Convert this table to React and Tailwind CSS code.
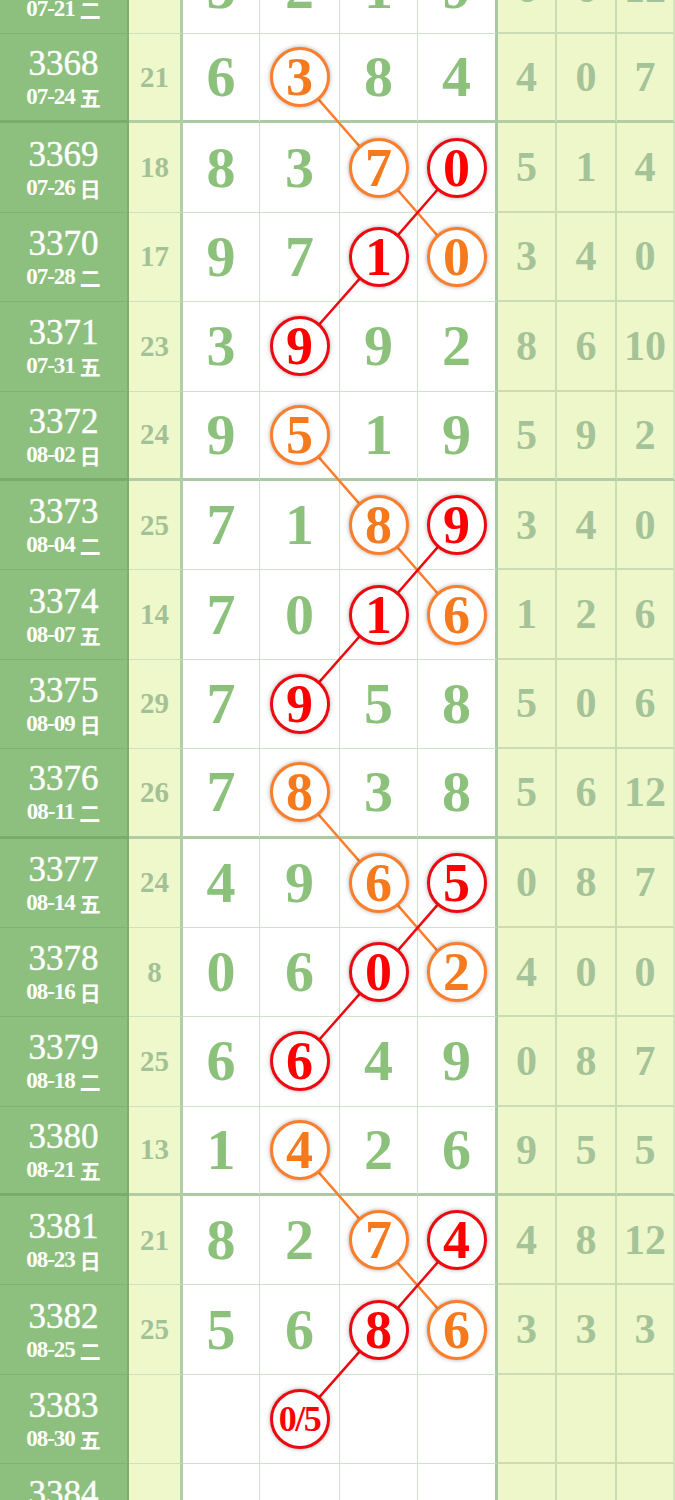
import React from "react";

const ROW_H = 89.4;

const rows = [
  { no: "3367", date: "07-21", wd: "二", sum: "15", d: ["3", "2", "1", "9"], r: ["6", "6", "12"], m: {} },
  { no: "3368", date: "07-24", wd: "五", sum: "21", d: ["6", "3", "8", "4"], r: ["4", "0", "7"], m: { 1: "o" } },
  { no: "3369", date: "07-26", wd: "日", sum: "18", d: ["8", "3", "7", "0"], r: ["5", "1", "4"], m: { 2: "o", 3: "r" } },
  { no: "3370", date: "07-28", wd: "二", sum: "17", d: ["9", "7", "1", "0"], r: ["3", "4", "0"], m: { 2: "r", 3: "o" } },
  { no: "3371", date: "07-31", wd: "五", sum: "23", d: ["3", "9", "9", "2"], r: ["8", "6", "10"], m: { 1: "r" } },
  { no: "3372", date: "08-02", wd: "日", sum: "24", d: ["9", "5", "1", "9"], r: ["5", "9", "2"], m: { 1: "o" } },
  { no: "3373", date: "08-04", wd: "二", sum: "25", d: ["7", "1", "8", "9"], r: ["3", "4", "0"], m: { 2: "o", 3: "r" } },
  { no: "3374", date: "08-07", wd: "五", sum: "14", d: ["7", "0", "1", "6"], r: ["1", "2", "6"], m: { 2: "r", 3: "o" } },
  { no: "3375", date: "08-09", wd: "日", sum: "29", d: ["7", "9", "5", "8"], r: ["5", "0", "6"], m: { 1: "r" } },
  { no: "3376", date: "08-11", wd: "二", sum: "26", d: ["7", "8", "3", "8"], r: ["5", "6", "12"], m: { 1: "o" } },
  { no: "3377", date: "08-14", wd: "五", sum: "24", d: ["4", "9", "6", "5"], r: ["0", "8", "7"], m: { 2: "o", 3: "r" } },
  { no: "3378", date: "08-16", wd: "日", sum: "8", d: ["0", "6", "0", "2"], r: ["4", "0", "0"], m: { 2: "r", 3: "o" } },
  { no: "3379", date: "08-18", wd: "二", sum: "25", d: ["6", "6", "4", "9"], r: ["0", "8", "7"], m: { 1: "r" } },
  { no: "3380", date: "08-21", wd: "五", sum: "13", d: ["1", "4", "2", "6"], r: ["9", "5", "5"], m: { 1: "o" } },
  { no: "3381", date: "08-23", wd: "日", sum: "21", d: ["8", "2", "7", "4"], r: ["4", "8", "12"], m: { 2: "o", 3: "r" } },
  { no: "3382", date: "08-25", wd: "二", sum: "25", d: ["5", "6", "8", "6"], r: ["3", "3", "3"], m: { 2: "r", 3: "o" } },
  { no: "3383", date: "08-30", wd: "五", sum: "", d: ["", "0/5", "", ""], r: ["", "", ""], m: { 1: "r" } },
  { no: "3384", date: "09-01", wd: "日", sum: "", d: ["", "", "", ""], r: ["", "", ""], m: {} },
];

const isThick = (no) => (parseInt(no, 10) - 3368) % 4 === 0;

const colX = [221, 299.5, 378.5, 456.5];
const rowY = (k) => {
  const bb = isThick(rows[k].no) ? 3 : 1;
  return k * ROW_H + (ROW_H - bb) / 2;
};

const orangeChains = [
  [[1, 1], [2, 2], [3, 3]],
  [[5, 1], [6, 2], [7, 3]],
  [[9, 1], [10, 2], [11, 3]],
  [[13, 1], [14, 2], [15, 3]],
];
const redChains = [
  [[2, 3], [3, 2], [4, 1]],
  [[6, 3], [7, 2], [8, 1]],
  [[10, 3], [11, 2], [12, 1]],
  [[14, 3], [15, 2], [16, 1]],
];

function Circle({ kind, text }) {
  const small = text.length > 1;
  return (
    <div
      className={
        "relative z-10 flex h-[60px] w-[60px] items-center justify-center rounded-full border-[3px] bg-white font-bold leading-none shadow-[0_0_4px_rgba(0,0,0,0.35)] " +
        (kind === "o" ? "border-[#fb7e2c] text-[#f57a1e] " : "border-[#ec0a10] text-[#ff0000] ") +
        (small ? "text-[36px] tracking-[-1.5px]" : "text-[54px]")
      }
    >
      {text}
    </div>
  );
}

function Row({ row }) {
  const thick = isThick(row.no);
  const mainW = ["w-[77px]", "w-[80px]", "w-[78px]", "w-[80px]"];
  const rightW = ["w-[59px]", "w-[60px]", "w-[58px]"];
  return (
    <div className="flex h-[89.4px]">
      <div
        className={
          "flex w-[129px] shrink-0 flex-col items-center justify-center border-r-2 border-r-[#7cae6c] bg-[#8dc07e] pt-[3px] text-white " +
          (thick ? "border-b-[3px] border-b-[#79ab6a]" : "border-b border-b-[#80b271]")
        }
      >
        <div className="text-[35px] leading-[34px] [-webkit-text-stroke:0.4px_white]">{row.no}</div>
        <div className="mt-[3px] flex items-center text-[23px] font-bold leading-[26px]">
          <span className="tracking-[-1px]">{row.date}</span>
          <span className="ml-[5px] font-['Noto_Sans_CJK_SC',sans-serif] text-[21px] font-bold">{row.wd}</span>
        </div>
      </div>
      <div
        className={
          "flex w-[54px] shrink-0 items-center justify-center border-r-[3px] border-r-[#b3cda6] bg-[#eff8cb] text-[29px] font-bold leading-none text-[#a3c196] " +
          (thick ? "border-b-[3px] border-b-[#b2cca3]" : "border-b border-b-[#cfe0bd]")
        }
      >
        {row.sum}
      </div>
      {row.d.map((v, i) => (
        <div
          key={i}
          className={
            "flex shrink-0 items-center justify-center bg-white text-[58px] font-bold leading-none text-[#8cc17c] " +
            mainW[i] +
            " " +
            (i === 3 ? "border-r-[3px] border-r-[#a9c7a0] " : "border-r border-r-[#d0e1ca] ") +
            (thick ? "border-b-[3px] border-b-[#acc8a4]" : "border-b border-b-[#d0e1ca]")
          }
        >
          {row.m[i] ? <Circle kind={row.m[i]} text={v} /> : v}
        </div>
      ))}
      {row.r.map((v, i) => (
        <div
          key={i}
          className={
            "flex shrink-0 items-center justify-center bg-[#eef7ca] text-[42px] font-bold leading-none text-[#a5c398] " +
            rightW[i] +
            " " +
            (i < 2 ? "border-r-2 border-r-[#c9dcb2] " : "border-r-2 border-r-[#d5e5bd] ") +
            (thick ? "border-b-[3px] border-b-[#b4cda4]" : "border-b-2 border-b-[#cbdcb3]")
          }
        >
          {v}
        </div>
      ))}
    </div>
  );
}

export default function App() {
  const total = rows.length * ROW_H;
  return (
    <div className="h-[1500px] w-[675px] overflow-hidden bg-white font-['Liberation_Serif','Noto_Sans_CJK_SC',serif]">
      <div className="relative mt-[-55.4px]">
        {rows.map((row) => (
          <Row key={row.no} row={row} />
        ))}
        <svg
          className="pointer-events-none absolute left-0 top-0"
          width="675"
          height={total}
          viewBox={`0 0 675 ${total}`}
        >
          {orangeChains.map((ch, ci) => (
            <polyline
              key={"o" + ci}
              points={ch.map(([k, c]) => `${colX[c]},${rowY(k)}`).join(" ")}
              fill="none"
              stroke="#fb7e2c"
              strokeWidth="2.5"
            />
          ))}
          {redChains.map((ch, ci) => (
            <polyline
              key={"r" + ci}
              points={ch.map(([k, c]) => `${colX[c]},${rowY(k)}`).join(" ")}
              fill="none"
              stroke="#ec0a10"
              strokeWidth="2.5"
            />
          ))}
        </svg>
      </div>
    </div>
  );
}
